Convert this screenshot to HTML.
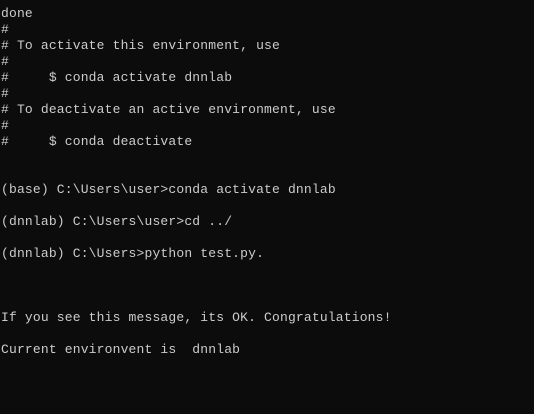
<!DOCTYPE html>
<html><head><style>
html,body{margin:0;padding:0;background:#0c0c0c;width:534px;height:414px;overflow:hidden}
pre{margin:0;padding:6px 0 0 1px;font-family:"Liberation Mono",monospace;font-size:13px;line-height:16px;letter-spacing:0.17px;color:#cccccc}
</style></head><body><pre>done
#
# To activate this environment, use
#
#     $ conda activate dnnlab
#
# To deactivate an active environment, use
#
#     $ conda deactivate


(base) C:\Users\user&gt;conda activate dnnlab

(dnnlab) C:\Users\user&gt;cd ../

(dnnlab) C:\Users&gt;python test.py.



If you see this message, its OK. Congratulations!

Current environvent is  dnnlab
</pre></body></html>
